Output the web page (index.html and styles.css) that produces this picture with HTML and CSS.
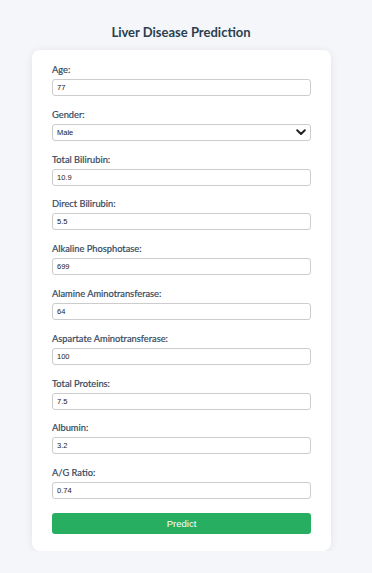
FILE: index.html
```html
<!DOCTYPE html>
<html lang="en">
<head>
    <meta charset="UTF-8">
    <title>Liver Disease Prediction</title>
    <link rel="stylesheet" href="styles.css">
</head>
<body>

<h2 class="title">Liver Disease Prediction</h2>

<div class="card">
    <form class="predict-form">
        <label for="age">Age:</label>
        <input type="text" id="age" value="77">

        <label for="gender">Gender:</label>
        <div class="select-wrap">
            <select id="gender">
                <option value="Male" selected>Male</option>
                <option value="Female">Female</option>
            </select>
            <svg class="chevron" width="10" height="7" viewBox="0 0 10 7">
                <path d="M1.2 1.3 L5 5 L8.8 1.3" fill="none" stroke="#222" stroke-width="2" stroke-linecap="round" stroke-linejoin="round"/>
            </svg>
        </div>

        <label for="tb">Total Bilirubin:</label>
        <input type="text" id="tb" value="10.9">

        <label for="db">Direct Bilirubin:</label>
        <input type="text" id="db" value="5.5">

        <label for="alkphos">Alkaline Phosphotase:</label>
        <input type="text" id="alkphos" value="699">

        <label for="sgpt">Alamine Aminotransferase:</label>
        <input type="text" id="sgpt" value="64">

        <label for="sgot">Aspartate Aminotransferase:</label>
        <input type="text" id="sgot" value="100">

        <label for="tp">Total Proteins:</label>
        <input type="text" id="tp" value="7.5">

        <label for="alb">Albumin:</label>
        <input type="text" id="alb" value="3.2">

        <label for="agratio">A/G Ratio:</label>
        <input type="text" id="agratio" value="0.74">

        <button type="button" class="predict-btn">Predict</button>
    </form>
</div>

</body>
</html>
```

FILE: styles.css
```css
body {
    font-family: 'Lato', 'Noto Sans', sans-serif;
    background-color: #f4f6f9;
    margin: 0;
    padding: 0;
}
.title {
    margin: 0;
    padding: 25px 10px 0 0;
    height: 25px;
    line-height: 15px;
    text-align: center;
    font-size: 13px;
    font-weight: bold;
    color: #2c3e50;
}
.card {
    width: 259px;
    margin: 0 0 0 32px;
    padding: 14px 20px 17px 20px;
    background: white;
    border-radius: 8px;
    box-shadow: 0 1px 8px rgba(0,0,0,0.08);
}
.predict-form {
    display: flex;
    flex-direction: column;
}
label {
    font-size: 9.3px;
    line-height: 12px;
    color: #34495e;
    margin-bottom: 3px;
    -webkit-text-stroke: 0.2px #34495e;
}
input, select {
    display: block;
    box-sizing: border-box;
    width: 100%;
    height: 17px;
    margin: 0 0 12.8px 0;
    padding: 0 4px;
    font-family: 'Liberation Sans', Arial, sans-serif;
    font-size: 7.5px;
    color: #222;
    background: white;
    border: 1px solid #ccc;
    border-radius: 3px;
}
.select-wrap {
    position: relative;
}
select {
    appearance: none;
    -webkit-appearance: none;
}
.chevron {
    position: absolute;
    right: 5px;
    top: 5px;
}
.predict-btn {
    margin-top: 1px;
    height: 21px;
    border: none;
    border-radius: 3px;
    background-color: #27ae60;
    color: white;
    font-family: 'Liberation Sans', Arial, sans-serif;
    font-size: 9.5px;
}
```
